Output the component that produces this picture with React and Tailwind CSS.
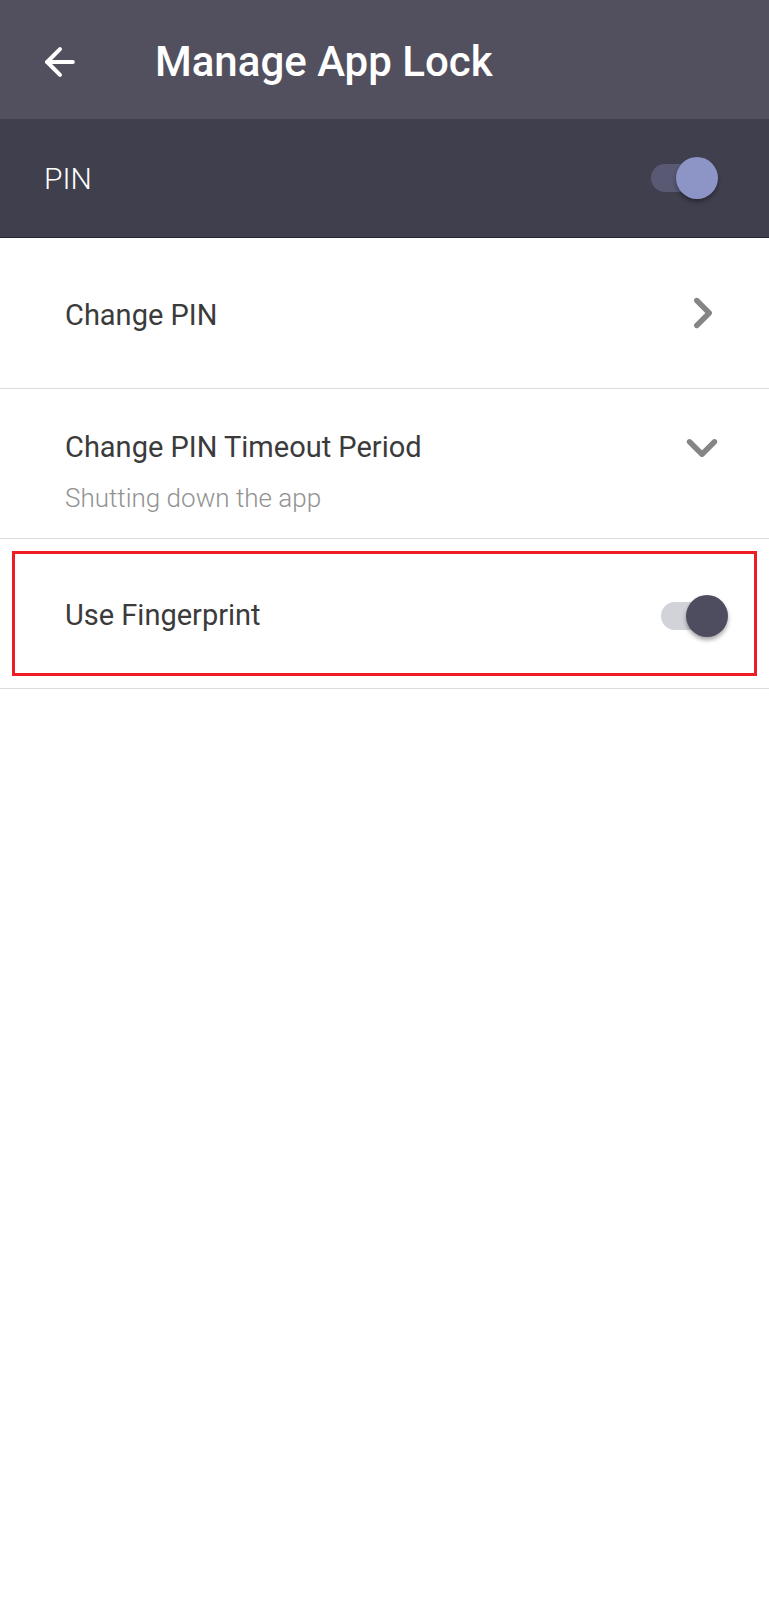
import { ArrowLeft, ChevronRight, ChevronDown } from "lucide-react";

const Toggle = ({ track, thumb }) => (
  <div className="relative w-[67px] h-[44px] flex items-center">
    <div className={`w-[62px] h-[28px] rounded-full ${track}`} />
    <div
      className={`absolute right-0 top-[1px] w-[42px] h-[42px] rounded-full shadow-[0_3px_4px_rgba(0,0,0,0.35)] ${thumb}`}
    />
  </div>
);

const App = () => {
  return (
    <div className="w-[769px] min-h-[1600px] bg-white font-['Roboto',sans-serif]">
      {/* Toolbar */}
      <div className="h-[119px] bg-[#52505f] flex items-center pt-[4px]">
        <div className="w-[155px] pl-[38px]">
          <ArrowLeft size={44} strokeWidth={2.2} className="text-white" />
        </div>
        <h1 className="text-[42px] font-medium text-white leading-none">
          Manage App Lock
        </h1>
      </div>

      {/* PIN master switch */}
      <div className="h-[119px] bg-[#403f4e] border-b border-[#25233a] flex items-center justify-between pl-[44px] pr-[51px]">
        <span className="text-[30px] font-light text-white">PIN</span>
        <Toggle track="bg-[#5a5974]" thumb="bg-[#8c95c6]" />
      </div>

      {/* Change PIN */}
      <div className="h-[151px] border-b border-[#dcdcdc] flex items-center justify-between pl-[65px] pr-[41px] pt-[6px]">
        <span className="text-[29px] text-[#3b3b3b]">Change PIN</span>
        <ChevronRight size={50} strokeWidth={2.6} className="text-[#858585] mt-[-6px]" />
      </div>

      {/* Timeout */}
      <div className="h-[150px] border-b border-[#dcdcdc] flex justify-between pl-[65px] pr-[42px] pt-[38px]">
        <div className="flex flex-col">
          <span className="text-[29px] text-[#3b3b3b] leading-[40px]">
            Change PIN Timeout Period
          </span>
          <span className="text-[26px] font-light text-[#929292] leading-[36px] mt-[13px]">
            Shutting down the app
          </span>
        </div>
        <ChevronDown size={50} strokeWidth={2.6} className="text-[#858585] mt-[-4px]" />
      </div>

      {/* Fingerprint */}
      <div className="h-[150px] border-b border-[#dcdcdc] p-[12px]">
        <div className="h-full border-[3px] border-[#ee1c24] flex items-center justify-between pl-[50px] pr-[26px] pt-[4px]">
          <span className="text-[29px] text-[#3b3b3b]">Use Fingerprint</span>
          <Toggle track="bg-[#d2d2d9]" thumb="bg-[#4e4d5f]" />
        </div>
      </div>
    </div>
  );
};

export default App;
